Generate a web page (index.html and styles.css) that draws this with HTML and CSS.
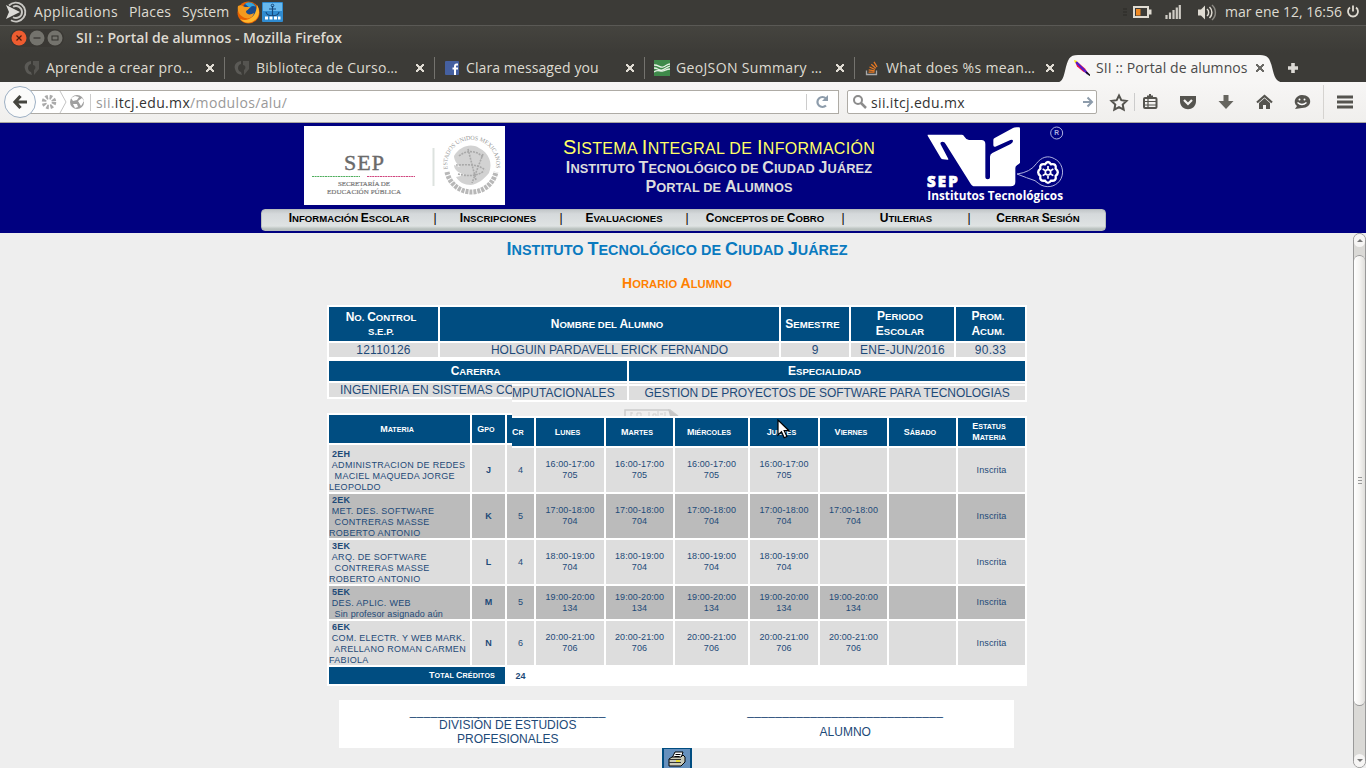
FILE: index.html
```html
<!DOCTYPE html>
<html lang="es">
<head>
<meta charset="utf-8">
<title>SII :: Portal de alumnos</title>
<link rel="stylesheet" href="styles.css">
</head>
<body>
<header class="panel">
  <svg class="mate" width="24" height="24" viewBox="0 0 24 24"><g fill="none" stroke="#c9c8c4" stroke-width="1.900"><path d="M5 5.500A9.500 9.500 0 1 1 7 20.300"/><path d="M9 6.800A6 6 0 1 1 9 17.200"/></g><path d="M2 5l14 7-14 7 3-7z" fill="#dcdbd7"/></svg>
  <span class="m1">Applications</span>
  <span class="m2">Places</span>
  <span class="m3">System</span>
  <svg class="ff" width="23" height="23" viewBox="0 0 23 23"><circle cx="11.500" cy="11.500" r="11" fill="#e66000"/><circle cx="12.500" cy="9" r="7.500" fill="#1a4b8c"/><path d="M8 3c4-3 9-1 11 3-3-2-5-1-6 1z" fill="#35a5dd"/><path d="M1 5c3-2 5 0 7 1l5 0c-1 3-4 3-4 5 1 3 5 3 8 1-1 5-6 7-11 4C2 14 0 9 1 5z" fill="#f39a1e"/><path d="M20 4c4 7 2 14-5 17-5 2-9 0-12-3 8 3 16-1 17-14z" fill="#ffb52b"/></svg>
  <svg class="dock" width="21" height="20" viewBox="0 0 21 20"><rect width="21" height="20" rx="1" fill="#2f8bd0"/><rect x="1" y="1" width="19" height="8" fill="#68b9ee"/><path d="M10.500 4v10M7 7h7M4 10c1 5 12 5 13 0" stroke="#16497c" fill="none" stroke-width="1.200"/><circle cx="10.500" cy="3.500" r="1.300" fill="none" stroke="#16497c"/><path d="M3 16h3M7.500 16h3M12 16h3M16 16h2.500" stroke="#fff" stroke-width="3"/></svg>
  <span class="grow"></span>
  <svg class="tray" width="100" height="24" viewBox="1122 0 100 24">
    <path d="M1123 9h4M1123 12h4M1123 15h4" stroke="#2b2a27"/>
    <rect x="1134" y="7" width="14" height="10" fill="none" stroke="#dfdbd2" stroke-width="2"/><rect x="1149" y="9.500" width="2.500" height="5" fill="#dfdbd2"/><rect x="1136" y="9" width="4.500" height="6.500" fill="#f08a24"/>
    <path d="M1166.500 19v-4M1170 19v-6.500M1173.500 19v-9M1176.800 19v-11.500M1179.800 19V5" stroke="#cfccc5" stroke-width="2.200"/>
    <path d="M1198 9.500h3l4-4v14l-4-4h-3z" fill="#dfdbd2"/><path d="M1207 9a4.500 4.500 0 0 1 0 7M1209.500 7a7.500 7.500 0 0 1 0 11" fill="none" stroke="#dfdbd2" stroke-width="1.500"/><path d="M1212 5a10 10 0 0 1 0 15" fill="none" stroke="#8b8983" stroke-width="1.500"/>
  </svg>
  <span class="clock">mar ene 12, 16:56</span>
  <svg class="power" width="14" height="14" viewBox="0 0 14 14"><path d="M4 2.500a5 5 0 1 0 6 0M7 .5v6" fill="none" stroke="#dfdbd2" stroke-width="1.800"/></svg>
</header>
<div class="titlebar">
  <svg width="54" height="18" viewBox="0 0 54 18"><rect width="54" height="18" rx="9" fill="#3a3834"/><circle cx="9" cy="9" r="7.500" fill="#ee5c30"/><circle cx="27" cy="9" r="7.500" fill="#74736d"/><circle cx="45" cy="9" r="7.500" fill="#74736d"/><path d="M6.500 6.500l5 5m0-5l-5 5" stroke="#4a1e10" stroke-width="1.200"/><path d="M23.500 9h7" stroke="#33322e" stroke-width="1.200"/><rect x="42" y="7" width="6" height="4" fill="none" stroke="#33322e"/></svg>
  <span class="wtitle">SII :: Portal de alumnos - Mozilla Firefox</span>
</div>
<div class="tabs">
  <div class="tab"><svg width="16" height="16" viewBox="0 0 16 16"><path d="M7 1C1 2 0 6 1 9c1 4 3 5 7 6l-1-3C3 11 3 5 7 4z" fill="#5b5a56"/><path d="M9 1h6v8l-5 6 0-5c2-1 2-5-1-5z" fill="#555450"/></svg><span class="t1">Aprende a crear pro…</span><i class="x"></i></div>
  <div class="tab"><svg width="16" height="16" viewBox="0 0 16 16"><path d="M7 1C1 2 0 6 1 9c1 4 3 5 7 6l-1-3C3 11 3 5 7 4z" fill="#5b5a56"/><path d="M9 1h6v8l-5 6 0-5c2-1 2-5-1-5z" fill="#555450"/></svg><span class="t1">Biblioteca de Curso…</span><i class="x"></i></div>
  <div class="tab"><svg width="16" height="16" viewBox="0 0 16 16"><rect x="1" y="1" width="14" height="14" rx="1" fill="#4560a0"/><path d="M14 4.500h-1.500q-1.500 0-1.500 2V15M8.500 8.500H14" stroke="#fff" stroke-width="2" fill="none"/></svg><span class="t3">Clara messaged you</span><i class="x"></i></div>
  <div class="tab"><svg width="16" height="16" viewBox="0 0 16 16"><rect width="16" height="16" fill="#3f8a4a"/><path d="M0 5c5 0 6 3 9 2s4-3 7-3M0 8c4 0 5 3 8 2s5-3 8-4M0 12c4-3 6 0 9-1s4-2 7-2" stroke="#e8f2e6" stroke-width="1.300" fill="none"/></svg><span class="t4">GeoJSON Summary …</span><i class="x"></i></div>
  <div class="tab last"><svg width="16" height="16" viewBox="0 0 16 16"><path d="M2.500 10.500v4h10v-4" stroke="#a9a9a9" fill="none" stroke-width="1.300"/><path d="M4.500 12.200h6M4.700 9.800l6 1M5.500 7l5.500 2.500M7.300 4.300l4.500 4M10 1.800l3 5" stroke="#e87922" stroke-width="1.300"/></svg><span class="t4">What does %s mean…</span><i class="x"></i></div>
  <div class="tab active"><svg class="shape" width="240" height="28" viewBox="0 0 240 28"><path d="M5 28c8 0 9-4 11-12C19 4 20 0 29 0h182c9 0 10 4 13 16 2 8 4 12 14 12z" fill="#f7f6f5"/></svg><svg width="16" height="16" viewBox="0 0 16 16"><path d="M1 1.500l2 0 8 7 4 6-6-3-6-5z" fill="#f0124a"/><path d="M2 2l12 12" stroke="#4b1fd0" stroke-width="2"/><path d="M0 0l3 1-2 2z" fill="#f5f000"/><path d="M12 12l4 3.500" stroke="#111" stroke-width="1.500"/></svg><span class="t3">SII :: Portal de alumnos</span><i class="x"></i></div>
  <svg class="plus" width="12" height="12" viewBox="0 0 12 12"><path d="M6 1v10M1 6h10" stroke="#dcdad5" stroke-width="3.600"/></svg>
</div>
<div class="nav">
  <div class="back"><svg width="16" height="16" viewBox="0 0 16 16"><path d="M8.500 2L3 8l5.500 6M3.500 8H15" fill="none" stroke="#45453f" stroke-width="3.200"/></svg></div>
  <div class="url">
    <svg width="48" height="22" viewBox="0 0 48 22"><circle cx="11" cy="11" r="5" fill="none" stroke="#aaa" stroke-width="4.500" stroke-dasharray="2.300 1.630"/><path d="M22 0l6 11-6 11" fill="none" stroke="#c4c4c4"/><circle cx="39" cy="11" r="7" fill="#a0a0a0"/><path d="M33 7l4-2 4 1-2 3-4 1zM40 10l4-3 2 3-3 5zM35 13l4 0 1 3-3 1z" fill="#fff"/></svg>
    <span class="addr">sii.<b>itcj.edu.mx</b>/modulos/alu/</span>
    <span class="grow"></span>
    <svg class="reload" width="32" height="22" viewBox="0 0 32 22"><path d="M.5 3v16" stroke="#ccc"/><path d="M20 14.500a5 5 0 1 1 0-7" fill="none" stroke="#8d9cab" stroke-width="2.200"/><path d="M22 4v6h-6z" fill="#8d9cab"/></svg>
  </div>
  <div class="search">
    <svg width="16" height="16" viewBox="0 0 16 16"><circle cx="6" cy="6" r="4" fill="none" stroke="#8c8c8c" stroke-width="2"/><path d="M9 9l5 5" stroke="#8c8c8c" stroke-width="2.500"/></svg>
    <span class="q">sii.itcj.edu.mx</span><span class="grow"></span>
    <svg width="12" height="12" viewBox="0 0 12 12"><path d="M1 6h8M5.500 1.500L10 6l-4.500 4.500" fill="none" stroke="#8d9cab" stroke-width="2"/></svg>
  </div>
  <svg class="tools" width="262" height="36" viewBox="1104 84 262 36">
    <path d="M1119 95.500l2.300 4.700 5.200.7-3.800 3.600 1 5.100-4.700-2.500-4.700 2.500 1-5.100-3.800-3.600 5.200-.7z" fill="none" stroke="#55544f" stroke-width="2"/>
    <path d="M1134.500 93v18" stroke="#ccc"/>
    <rect x="1144" y="98" width="12.500" height="10" rx="1" fill="none" stroke="#55544f" stroke-width="2"/><path d="M1147 96.500h6M1149 95h2" stroke="#55544f" stroke-width="2"/><path d="M1145 101.500h11M1145 105h11M1148 99v8" stroke="#55544f" stroke-width="1.200"/>
    <path d="M1180 96h16v5c0 11-16 11-16 0z" fill="#55544f"/><path d="M1184 100l4 4 4-4" fill="none" stroke="#f4f3f1" stroke-width="2.200"/>
    <path d="M1223.500 95h5v6h5l-7.500 8-7.500-8h5z" fill="#66655f"/>
    <path d="M1257 102.500l7.500-6.500 7.500 6.500" fill="none" stroke="#55544f" stroke-width="2.200"/><path d="M1259 103l5.500-4.700 5.500 4.700v6h-4v-4h-3v4h-4z" fill="#55544f"/>
    <path d="M1302 95c11 0 11 13 0 13l-7 1 2-3c-5-4-1-11 5-11z" fill="#55544f"/><circle cx="1299.500" cy="99.500" r="1" fill="#fff"/><circle cx="1304.500" cy="99.500" r="1" fill="#fff"/><path d="M1297.500 102.500q4.500 4 9 0" stroke="#fff" stroke-width="1.300" fill="none"/>
    <path d="M1323.500 85v34" stroke="#d5d3d0"/>
    <path d="M1337 97h16M1337 102h16M1337 107h16" stroke="#55544f" stroke-width="2.800"/>
  </svg>
</div>
<div class="banner">
  <div class="brand">
    <svg class="sep" width="201" height="79" viewBox="304 126 201 79"><rect x="304" y="126" width="201" height="79" fill="#fff"/>
      <text x="344" y="170" class="lsep" textLength="40">SEP</text><path d="M312 176.500h48" stroke="#4fae5d" stroke-dasharray="2 .6"/><path d="M367 176.500h48" stroke="#d0457e" stroke-dasharray="2 .6"/>
      <text x="338" y="186" class="lsub" textLength="52">SECRETARÍA DE</text><text x="327" y="194" class="lsub" textLength="74">EDUCACIÓN PÚBLICA</text>
      <path d="M433.500 148v38" stroke="#dde2df" stroke-width="2"/>
      <path id="arc" d="M448.500 172A24.500 24.500 0 1 1 495 172" fill="none"/><text class="coat"><textPath href="#arc" startOffset="3">ESTADOS UNIDOS MEXICANOS</textPath></text>
      <path d="M447 172a25 25 0 0 0 49 0" fill="none" stroke="#b8b8b8" stroke-width="5" stroke-dasharray="3 1"/>
      <path d="M454 156c6-10 17-13 25-8 10 5 14 15 10 25-5 6-11 11-18 12-7 0-12-3-15-8l9-2c-6-2-11-5-11-10l6 2c-3-3-6-7-6-11z" fill="#d2d2d2"/><path d="M459 156c7-6 17-6 24 1M456 165c8 0 21-2 29 5M458 174c8 2 18 3 26-3M468 149l8 31M483 154l-11 29" stroke="#a9a9a9" stroke-width="1.600" stroke-dasharray="2 1" fill="none"/>
    </svg>
    <div class="titles"><div class="b1"><span class="sc"><i>S</i>istema <i>I</i>ntegral de <i>I</i>nformación</span></div><div class="b2"><span class="sc"><i>I</i>nstituto <i>T</i>ecnológico de <i>C</i>iudad <i>J</i>uárez</span></div><div class="b2"><span class="sc"><i>P</i>ortal de <i>A</i>lumnos</span></div></div>
    <svg class="tec" width="140" height="78" viewBox="198 18 420 234">
      <path d="M203 44h103q4 0 8 7 5 9 13 9h37q12 0 12 12v100q0 6 7 6t7-6v-62q0-8 7-11l55-27q7-4 7-9t-8-3l-45 20q-6 2-6-5V60q0-4 4-6l55-30q3-2 11-2h7q3 0 3 4v102q-1 3-8 7-6 3-6 9v42q0 13-14 13H345q-10 0-15-11L257 72q-3-7-10-7-9 1-4 10l22 42q1 3-3 2l-13-1q-4 0-7-5l-39-66z" fill="#fff"/>
      <g fill="none" stroke="#aeb1e0" stroke-width="3"><path d="M471 162q40-5 58-31c15-20 35-26 54-15 22 10 31 38 20 60-10 20-35 31-60 19q-8-5-18-13-24-8-54-20z"/><circle cx="590" cy="39" r="18"/></g>
      <g fill="none" stroke="#fff" stroke-width="7"><path d="M555 133q9-14 18 0 17-3 14 13 13 11 0 22 3 16-14 14-9 13-18 0-17 2-14-14-13-11 0-22-3-16 14-13z"/><circle cx="564" cy="157" r="8" stroke-width="5"/><path d="M564 147v-9M572 152l8-5M572 162l8 5M564 167v9M556 162l-8 5M556 152l-8-5" stroke-width="5"/></g>
      <text x="583" y="46" class="reg">R</text><text x="201" y="200" class="tsep" textLength="92">SEP</text><text x="202" y="239" class="tins" textLength="407" lengthAdjust="spacingAndGlyphs">Institutos Tecnológicos</text>
    </svg>
  </div>
  <nav class="menu"><span class="n1"><b class="sc"><i>I</i>nformación <i>E</i>scolar</b></span><em>|</em><span class="n2"><b class="sc"><i>I</i>nscripciones</b></span><em>|</em><span class="n2"><b class="sc"><i>E</i>valuaciones</b></span><em>|</em><span class="n3"><b class="sc"><i>C</i>onceptos de <i>C</i>obro</b></span><em>|</em><span class="n2"><b class="sc"><i>U</i>tilerias</b></span><em>|</em><span class="n4"><b class="sc"><i>C</i>errar <i>S</i>esión</b></span></nav>
</div>
<div class="page">
<main>
  <h1><span class="sc"><i>I</i>nstituto <i>T</i>ecnológico de <i>C</i>iudad <i>J</i>uárez</span></h1>
  <h2><span class="sc"><i>H</i>orario <i>A</i>lumno</span></h2>
  <section class="sheet top">
    <div class="row info head"><div><span class="sc"><i>N</i>o. <i>C</i>ontrol<br>s.e.p.</span></div><div><span class="sc"><i>N</i>ombre del <i>A</i>lumno</span></div><div><span class="sc"><i>S</i>emestre</span></div><div><span class="sc"><i>P</i>eriodo<br><i>E</i>scolar</span></div><div><span class="sc"><i>P</i>rom.<br><i>A</i>cum.</span></div></div>
    <div class="row info data"><div class="num">12110126</div><div>HOLGUIN PARDAVELL ERICK FERNANDO</div><div>9</div><div class="num">ENE-JUN/2016</div><div class="num">90.33</div></div>
    <div class="row career head"><div><span class="sc"><i>C</i>arerra</span></div><div><span class="sc"><i>E</i>specialidad</span></div></div>
  </section>
  <section class="split">
    <div class="left">
      <div class="dl">INGENIERIA EN SISTEMAS CO</div>
      <div class="gapl"></div>
      <div class="hl"><div><span class="sc"><i>M</i>ateria</span></div><div><span class="sc"><i>G</i>po</span></div><div></div></div>
      <div class="sl"><div></div><div></div><div></div></div>
    </div>
    <div class="right">
      <div class="thin"><div></div><div></div></div>
      <div class="dr"><div>MPUTACIONALES</div><div>GESTION DE PROYECTOS DE SOFTWARE PARA TECNOLOGIAS</div></div>
      <div class="gapr"><svg width="56" height="7" viewBox="0 0 56 7"><path d="M1 7V1h45l8 6" fill="none" stroke="#ccc" stroke-width="1.500"/><path d="M44 0l10 7h-8z" fill="#c6c6c6"/><path d="M7 3v4M7 4h2M13 7V4h4v3M25 3v4M29 7V5h3v2M34 2v5M36 5h3M41 3v4" stroke="#d0d0d0" fill="none"/></svg></div>
      <div class="hr"><div><span class="sc"><i>C</i>r</span></div><div><span class="sc"><i>L</i>unes</span></div><div><span class="sc"><i>M</i>artes</span></div><div><span class="sc"><i>M</i>iércoles</span></div><div><span class="sc"><i>J</i>ueves</span></div><div><span class="sc"><i>V</i>iernes</span></div><div><span class="sc"><i>S</i>ábado</span></div><div><span class="sc"><i>E</i>status<br><i>M</i>ateria</span></div></div>
    </div>
  </section>
  <section class="sheet sched">
    <div class="row r"><div><b>2EH</b><br>&nbsp;ADMINISTRACION DE REDES<br>&nbsp; MACIEL MAQUEDA JORGE<br>LEOPOLDO</div><div><b>J</b></div><div>4</div><div>16:00-17:00<br>705</div><div>16:00-17:00<br>705</div><div>16:00-17:00<br>705</div><div>16:00-17:00<br>705</div><div></div><div></div><div>Inscrita</div></div>
    <div class="row r alt"><div><b>2EK</b><br>&nbsp;MET. DES. SOFTWARE<br>&nbsp; CONTRERAS MASSE<br>ROBERTO ANTONIO</div><div><b>K</b></div><div>5</div><div>17:00-18:00<br>704</div><div>17:00-18:00<br>704</div><div>17:00-18:00<br>704</div><div>17:00-18:00<br>704</div><div>17:00-18:00<br>704</div><div></div><div>Inscrita</div></div>
    <div class="row r"><div><b>3EK</b><br>&nbsp;ARQ. DE SOFTWARE<br>&nbsp; CONTRERAS MASSE<br>ROBERTO ANTONIO</div><div><b>L</b></div><div>4</div><div>18:00-19:00<br>704</div><div>18:00-19:00<br>704</div><div>18:00-19:00<br>704</div><div>18:00-19:00<br>704</div><div></div><div></div><div>Inscrita</div></div>
    <div class="row r alt short"><div><b>5EK</b><br>&nbsp;DES. APLIC. WEB<br>&nbsp; <span class="low">Sin profesor asignado aún</span></div><div><b>M</b></div><div>5</div><div>19:00-20:00<br>134</div><div>19:00-20:00<br>134</div><div>19:00-20:00<br>134</div><div>19:00-20:00<br>134</div><div>19:00-20:00<br>134</div><div></div><div>Inscrita</div></div>
    <div class="row r"><div><b>6EK</b><br>&nbsp;COM. ELECTR. Y WEB MARK.<br>&nbsp; ARELLANO ROMAN CARMEN<br>FABIOLA</div><div><b>N</b></div><div>6</div><div>20:00-21:00<br>706</div><div>20:00-21:00<br>706</div><div>20:00-21:00<br>706</div><div>20:00-21:00<br>706</div><div>20:00-21:00<br>706</div><div></div><div>Inscrita</div></div>
    <div class="total"><div><span class="sc"><i>T</i>otal <i>C</i>réditos</span></div><b>24</b></div>
  </section>
  <section class="sign"><div><p>____________________________</p>DIVISIÓN DE ESTUDIOS<br>PROFESIONALES</div><div class="al"><p>____________________________</p>ALUMNO</div></section>
  <button class="print"><svg width="18" height="16" viewBox="0 0 18 16"><path d="M4 7l3-6h8l-2 6z" fill="#fff" stroke="#000"/><path d="M7.500 3.500h5M6.500 5.500h5" stroke="#000"/><path d="M1 8l3-2h9l2-2 2 2v5l-4 4H1z" fill="#c9c9b8" stroke="#000"/><path d="M1 8.500h12M1 11.500h12" stroke="#333"/><path d="M8 10h4" stroke="#f2e200" stroke-width="1.500"/></svg></button>
</main>
<div class="scroll"><div class="up"></div><div class="track"><div class="thumb"><i></i><i></i><i></i></div></div><div class="down"></div></div>
</div>
<svg class="cursor" width="14" height="20" viewBox="0 0 14 20"><path d="M1 1v15l3.500-3.300 2.700 6 2.700-1.200-2.700-5.800H12z" fill="#fff" stroke="#000" stroke-width="1.200"/></svg>
</body>
</html>
```
FILE: styles.css
```css
* { box-sizing: border-box; }
body { margin: 0; width: 1366px; height: 768px; overflow: hidden; background: #eee; font-family: "Liberation Sans", Arial, sans-serif; position: relative; }
.grow { flex: 1; }
svg { display: block; flex: none; }
/* small capitals at 80% of the capital height */
.sc { font-size: .8em; text-transform: uppercase; }
.sc i { font-size: 1.25em; font-style: normal; }
.panel, .titlebar, .tabs, .nav { font-family: "Open Sans", "Noto Sans", sans-serif; font-size: 14px; white-space: nowrap; }
.panel { height: 25px; background: #3c3b37; display: flex; align-items: center; color: #dfdbd2; line-height: 24px; padding: 0 6px 1px 4px; }
.m1 { margin-left: 6px; width: 84px; letter-spacing: .35px; }
.m2 { margin-left: 11px; width: 42px; letter-spacing: .2px; }
.m3 { margin-left: 11px; width: 48px; }
.ff { margin-left: 7px; }
.dock { margin-left: 2px; }
.clock { width: 116px; margin: 0 5px 0 3px; }
.titlebar { height: 28px; border-top: 1px solid #5a5955; background: linear-gradient(#45443f, #3c3b37); display: flex; align-items: center; padding: 0 0 3px 10px; }
.wtitle { margin-left: 12px; font-weight: 600; color: #dfdbd2; letter-spacing: .03px; position: relative; top: -1px; }
.tabs { height: 29px; background: #3c3b37; display: flex; align-items: center; padding-left: 15px; color: #dfdbd2; }
.tab { width: 210px; height: 22px; display: flex; align-items: center; padding-left: 9px; border-right: 1px solid #74736e; position: relative; }
.tab span { margin-left: 6px; width: 157px; }
.t1 { letter-spacing: .25px; } .t3 { letter-spacing: .1px; } .t4 { letter-spacing: .35px; }
.tab.last { border-right: 0; }
.tab.active { border: 0; color: #4a4a4a; width: 206px; }
.tab svg, .tab span, .tab .x { position: relative; }
.tab .shape { position: absolute; left: -16px; top: -2px; }
.x { width: 8px; height: 8px; margin-left: 3px; background: linear-gradient(45deg, transparent 38%, #dfdbd2 38% 62%, transparent 62%), linear-gradient(-45deg, transparent 38%, #dfdbd2 38% 62%, transparent 62%); }
.active .x { background: linear-gradient(45deg, transparent 38%, #6b6a66 38% 62%, transparent 62%), linear-gradient(-45deg, transparent 38%, #6b6a66 38% 62%, transparent 62%); }
.plus { margin-left: 16px; }
.nav { height: 41px; background: linear-gradient(#f7f6f5, #f0efed); border-bottom: 1px solid #a9a6a0; display: flex; align-items: center; padding-left: 4px; }
.back { width: 32px; height: 32px; border-radius: 50%; background: #fbfbfa; border: 1px solid #9db0c4; display: flex; align-items: center; justify-content: center; z-index: 1; }
.url { width: 809px; height: 24px; margin-left: -6px; border: 1px solid #aeaba5; background: #fff; display: flex; align-items: center; padding-left: 7px; color: #999; }
.url b { font-weight: 400; color: #333; }
.addr { border-left: 1px solid #ccc; margin-left: 4px; padding-left: 5px; line-height: 17px; letter-spacing: .35px; }
.search { width: 250px; height: 24px; margin-left: 8px; border: 1px solid #aeaba5; border-radius: 2px; background: #fff; display: flex; align-items: center; padding: 0 2px 0 4px; color: #333; }
.q { margin-left: 3px; letter-spacing: .34px; }
.tools { margin-left: 7px; }
.banner { height: 110px; background: #000080; padding: 3px 0 0 261px; }
.brand { display: flex; height: 83px; padding-left: 43px; }
.lsep { font: 22px "Liberation Serif", serif; fill: #6a6a6a; stroke: #6a6a6a; stroke-width: .4; }
.lsub { font: 7px "Liberation Serif", serif; fill: #777; stroke: #777; stroke-width: .2; }
.coat { font: 6px "Liberation Serif", serif; fill: #999; letter-spacing: -.1px; }
.titles { width: 421px; text-align: center; padding: 10px 0 0 7px; white-space: nowrap; }
.b1 { font-size: 20px; height: 23px; line-height: 23px; color: #ffff66; letter-spacing: .29px; }
.b2 { font-size: 16px; font-weight: bold; height: 19px; line-height: 18px; color: #ddd; letter-spacing: .1px; }
.reg { font: bold 20px "Liberation Sans", sans-serif; fill: #aeb1e0; }
.tsep { font: 800 45px "Open Sans", sans-serif; fill: #fff; stroke: #fff; stroke-width: 2; }
.tins { font: 700 36px "Open Sans", sans-serif; fill: #fff; }
.menu { width: 845px; height: 22px; border-radius: 4px; background: linear-gradient(#c3c8ca, #d5d9db 20%, #dfe3e3 80%, #b8c0bd 95%); border: 1px solid #b7bdbd; display: flex; padding-left: 3px; font-size: 12px; line-height: 16px; color: #000; white-space: nowrap; }
.menu span { text-align: center; }
.menu em { width: 4px; font-style: normal; text-align: center; }
.n1 { width: 168px; } .n2 { width: 122px; } .n3 { width: 152px; } .n4 { width: 134px; }
.page { display: flex; height: 535px; }
main { width: 1353px; padding: 7px 0 0 327px; color: #1d4a78; }
h1, h2 { margin: 0; width: 700px; text-align: center; white-space: nowrap; }
h1 { font-size: 18px; height: 20px; line-height: 19px; color: #0a7abf; letter-spacing: .02px; }
h2 { font-size: 14px; height: 16px; line-height: 16px; color: #ff8000; margin-top: 15px; letter-spacing: .06px; }
.sheet { width: 700px; background: #fff; padding: 2px; }
.top { margin-top: 14px; height: 78px; }
.row { display: grid; column-gap: 2px; text-align: center; }
.info { grid-template-columns: 109px 339px 68px 103px 69px; }
.career { grid-template-columns: 298px 396px; }
.head > div, .hl > div, .hr > div, .total > div { background: #004d81; color: #fff; font-weight: bold; display: flex; align-items: center; justify-content: center; text-align: center; padding-right: 5px; }
.head { font-size: 12px; line-height: 14px; height: 34px; }
.data { margin-top: 2px; height: 14px; font-size: 12px; line-height: 14px; }
.data > div { background: #ddd; white-space: nowrap; }
.num { letter-spacing: .25px; }
.career { margin-top: 4px; height: 20px; }
.split { display: flex; width: 700px; height: 65px; white-space: nowrap; }
.left { width: 185px; overflow: hidden; }
.right { width: 515px; overflow: hidden; }
.left > .dl { height: 16px; border: solid #fff; border-width: 0 0 2px 2px; background: #ddd; padding-left: 11px; font-size: 12px; line-height: 14px; }
.gapl { height: 14px; }
.hl, .sl { display: grid; grid-template-columns: 141px 33px 27px; column-gap: 2px; background: #fff; padding-left: 2px; font-size: 9px; }
.hl { height: 32px; padding-top: 2px; padding-bottom: 2px; line-height: 11px; }
.sl { height: 3px; } .sl > div { background: #ddd; }
.thin { display: grid; grid-template-columns: 115px 396px; column-gap: 2px; height: 3px; background: #fff; padding-bottom: 2px; }
.thin > div, .dr > div { background: #ddd; }
.dr { display: grid; grid-template-columns: 115px 396px; column-gap: 2px; height: 16px; background: #fff; padding-bottom: 2px; font-size: 12px; line-height: 14px; }
.dr > div { letter-spacing: .07px; }
.dr > div + div { text-align: center; letter-spacing: -.05px; }
.gapr { height: 14px; padding: 7px 0 0 112px; }
.hr { display: grid; grid-template-columns: 22px 68px 67px 73px 68px 67px 67px 67px; column-gap: 2px; background: #fff; height: 32px; padding: 2px 0; font-size: 9px; line-height: 11px; }
.hr > div:first-child { justify-content: flex-start; }
.sched { padding-top: 0; font-size: 9px; line-height: 11px; height: 238px; }
.r { grid-template-columns: 141px 33px 27px 68px 67px 73px 68px 67px 67px 67px; height: 44px; margin-bottom: 2px; letter-spacing: .1px; }
.r > div { background: #ddd; display: grid; align-items: center; align-content: center; }
.r > div:first-child { display: block; height: 44px; padding-top: 1px; text-align: left; white-space: nowrap; letter-spacing: .3px; }
.r > div:first-child b { padding-left: 3px; }
.alt > div { background: #bbb; }
.short, .short > div:first-child { height: 33px; }
.low { letter-spacing: .13px; }
.total { display: flex; height: 17px; font-size: 9px; align-items: stretch; line-height: 18px; }
.total > div { width: 176px; justify-content: flex-end; padding-right: 10px; letter-spacing: .09px; }
.total b { width: 31px; text-align: center; }
.sign { width: 675px; height: 48px; margin: 14px 0 0 12px; background: #fff; display: grid; grid-template-columns: 1fr 1fr; text-align: center; font-size: 12px; line-height: 14px; padding-top: 4px; }
.sign p { margin: 0; letter-spacing: .326px; }
.al p { margin-bottom: 7px; }
.print { display: flex; align-items: flex-start; margin-left: 335px; width: 30px; height: 28px; border: 1px solid #004d81; border-width: 1px 2px; background: #6690bd; padding: 2px 0 0 4px; }
.scroll { width: 13px; height: 535px; border: 1px solid #999; border-radius: 7px; background: #dad9d6; display: flex; flex-direction: column; }
.up, .down { height: 13px; display: flex; align-items: center; justify-content: center; background: #f6f5f4; border-radius: 6px; }
.up::before, .down::before { content: ""; border: 3px solid transparent; border-top: 0; border-bottom-color: #777; }
.down::before { transform: rotate(180deg); }
.track { flex: 1; padding-top: 8px; }
.thumb { height: 451px; border: solid #999; border-width: 1px 0; border-radius: 6px; background: linear-gradient(90deg, #fff, #f5f4f2 50%, #dfdedb); display: flex; flex-direction: column; align-items: center; justify-content: center; gap: 2px; }
.thumb i { width: 4px; height: 1px; background: #999; }
.cursor { position: absolute; left: 777px; top: 419px; }
```
